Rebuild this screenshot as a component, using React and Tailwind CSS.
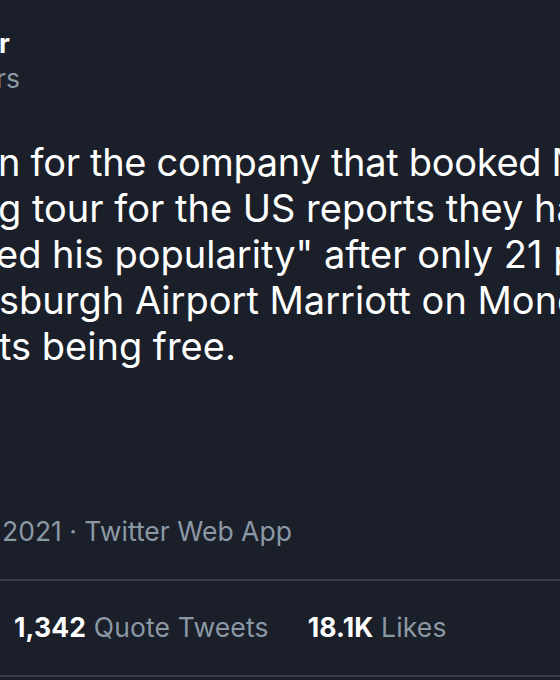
export default function App() {
  const lines = [
    { t: "n for the company that booked Nigel", ml: "ml-[-2px] tracking-[-0.3px]" },
    { t: "g tour for the US reports they have", ml: "ml-[-2px]" },
    { t: "ed his popularity\" after only 21 people", ml: "ml-[-4px]" },
    { t: "sburgh Airport Marriott on Monday", ml: "ml-[-1px]" },
    { t: "ts being free.", ml: "ml-[-1px]" },
  ];
  return (
    <div
      className="w-[560px] h-[680px] overflow-hidden bg-[#1a1f29] text-white"
      style={{ fontFamily: "Inter, 'Noto Sans', sans-serif" }}
    >
      <div className="pt-[26px]">
        <div className="whitespace-nowrap text-[26.5px] leading-[35px] font-bold ml-[-1px]">r</div>
        <div className="whitespace-nowrap text-[26.5px] leading-[35px] text-[#8b98a5] ml-[-4px]">rs</div>
      </div>
      <div className="mt-[43px] text-[38px] leading-[46px]">
        {lines.map((l, i) => (
          <div key={i} className={"whitespace-nowrap " + l.ml}>
            {l.t}
          </div>
        ))}
      </div>
      <div className="mt-[145px] whitespace-nowrap text-[26.5px] leading-[35px] text-[#8b98a5] ml-[2px]">
        2021 · Twitter Web App
      </div>
      <div className="mt-[30px] h-[2px] bg-[#38414b]" />
      <div className="mt-[29px] flex items-center gap-[39px] whitespace-nowrap text-[26.5px] leading-[35px] pl-[14px]">
        <span className="tracking-[0.15px]">
          <span className="font-bold text-white">1,342</span>
          <span className="text-[#8b98a5]"> Quote Tweets</span>
        </span>
        <span className="tracking-[0.15px]">
          <span className="font-bold text-white">18.1K</span>
          <span className="text-[#8b98a5]"> Likes</span>
        </span>
      </div>
      <div className="mt-[30px] h-[2px] bg-[#38414b]" />
    </div>
  );
}
